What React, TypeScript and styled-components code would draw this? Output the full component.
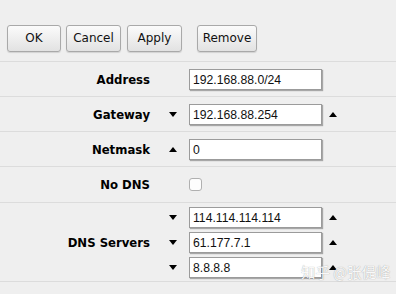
import React from "react";
import styled, { createGlobalStyle } from "styled-components";

const GlobalStyle = createGlobalStyle`
  html, body {
    margin: 0;
    padding: 0;
    background: #efefef;
  }
  body {
    font-family: "DejaVu Sans", Verdana, sans-serif;
    color: #000;
  }
`;

const Page = styled.div`
  position: relative;
  width: 396px;
  height: 294px;
  overflow: hidden;
  background: #efefef;
`;

const Toolbar = styled.div`
  display: flex;
  align-items: center;
  padding: 15px 7px 0 7px;
  height: 46px;
  border-bottom: 1px solid #dcdcdc;
`;

const Button = styled.button<{ $w: number; $gap: number }>`
  width: ${(p) => p.$w}px;
  height: 27px;
  margin-right: ${(p) => p.$gap}px;
  padding: 0;
  font-family: "DejaVu Sans", Verdana, sans-serif;
  font-size: 12px;
  color: #111;
  border: 1px solid #a9a9a9;
  border-radius: 3px;
  background: linear-gradient(#fbfbfb, #e2e2e2);
  box-shadow: 0 1px 1px rgba(0, 0, 0, 0.12);
`;

const Row = styled.div<{ $top: number; $bottom: number }>`
  display: grid;
  grid-template-columns: 150px 39px auto;
  align-items: center;
  padding: ${(p) => p.$top}px 0 ${(p) => p.$bottom}px;
  border-bottom: 1px solid #dcdcdc;
`;

const Label = styled.div`
  text-align: right;
  font-weight: bold;
  font-size: 11.7px;
`;

const Fields = styled.div`
  grid-column: 2 / 4;
  display: flex;
  flex-direction: column;
  gap: 4px;
`;

const Field = styled.div`
  display: grid;
  grid-template-columns: 39px 133px auto;
  align-items: center;
  height: 21px;
`;

const Slot = styled.div`
  display: flex;
  justify-content: flex-end;
  padding-right: 12px;
`;

const RightSlot = styled.div`
  padding-left: 7px;
  display: flex;
`;

const Arrow = styled.span<{ $up?: boolean }>`
  width: 0;
  height: 0;
  border-left: 4px solid transparent;
  border-right: 4px solid transparent;
  ${(p) => (p.$up ? "border-bottom: 5px solid #000;" : "border-top: 5px solid #000;")}
`;

const Input = styled.div`
  box-sizing: border-box;
  height: 21px;
  padding: 2px 3px 0;
  background: #fff;
  border: 1px solid #9b9b9b;
  box-shadow: 1px 1px 1px rgba(0, 0, 0, 0.3);
  font-family: "Liberation Sans", Arial, sans-serif;
  font-size: 12.2px;
  line-height: 16px;
  color: #111;
`;

const Check = styled.span`
  display: block;
  width: 11px;
  height: 11px;
  margin-left: 39px;
  border: 1px solid #b0b0b0;
  border-radius: 3px;
  background: #fdfdfd;
`;

const Watermark = styled.div`
  position: absolute;
  left: 301px;
  top: 262px;
  white-space: nowrap;
  font-family: "Noto Sans CJK SC", sans-serif;
  font-size: 14.5px;
  line-height: 20px;
  color: rgba(255, 255, 255, 0.95);
  text-shadow: 0 0 1px rgba(0, 0, 0, 0.4);
`;

type Side = "up" | "down" | undefined;

function FieldLine({ value, left, right }: { value: string; left?: Side; right?: Side }) {
  return (
    <Field>
      <Slot>{left && <Arrow $up={left === "up"} />}</Slot>
      <Input>{value}</Input>
      <RightSlot>{right && <Arrow $up={right === "up"} />}</RightSlot>
    </Field>
  );
}

export default function App() {
  return (
    <Page>
      <GlobalStyle />
      <Toolbar>
        <Button $w={54} $gap={5}>OK</Button>
        <Button $w={55} $gap={6}>Cancel</Button>
        <Button $w={55} $gap={15}>Apply</Button>
        <Button $w={60} $gap={0}>Remove</Button>
      </Toolbar>

      <Row $top={7} $bottom={6}>
        <Label>Address</Label>
        <Fields>
          <FieldLine value="192.168.88.0/24" />
        </Fields>
      </Row>
      <Row $top={7} $bottom={6}>
        <Label>Gateway</Label>
        <Fields>
          <FieldLine value="192.168.88.254" left="down" right="up" />
        </Fields>
      </Row>
      <Row $top={7} $bottom={6}>
        <Label>Netmask</Label>
        <Fields>
          <FieldLine value="0" left="up" />
        </Fields>
      </Row>
      <Row $top={7} $bottom={7}>
        <Label>No DNS</Label>
        <Fields>
          <Field>
            <Check />
          </Field>
        </Fields>
      </Row>
      <Row $top={4} $bottom={3}>
        <Label>DNS Servers</Label>
        <Fields>
          <FieldLine value="114.114.114.114" left="down" right="up" />
          <FieldLine value="61.177.7.1" left="down" right="up" />
          <FieldLine value="8.8.8.8" left="down" right="up" />
        </Fields>
      </Row>

      <Watermark>知乎 @张偍峰</Watermark>
    </Page>
  );
}
